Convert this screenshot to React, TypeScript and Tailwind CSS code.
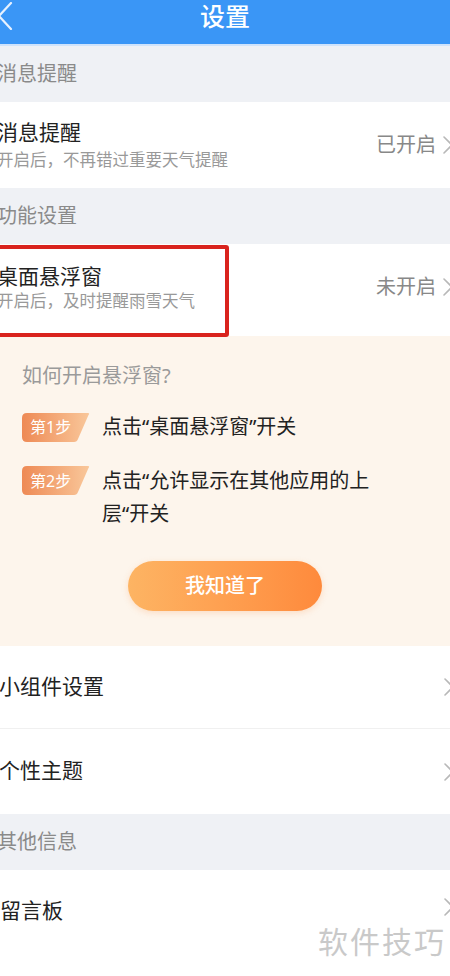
import React from 'react'

const FONT = { fontFamily: '"Noto Sans", "Noto Sans CJK SC", sans-serif' }

function Chevron({ className = '' }: { className?: string }) {
  return (
    <svg width="10" height="18" viewBox="0 0 10 18" className={className} fill="none">
      <path d="M1 1l8 8-8 8" stroke="#b8b8b8" strokeWidth="1.6" strokeLinecap="round" strokeLinejoin="round" />
    </svg>
  )
}

function SectionBand({ label }: { label: string }) {
  return (
    <div className="flex h-[56px] items-center bg-[#eff1f5]">
      <span className="-ml-[3px] text-[20px] text-[#8a8a8a]">{label}</span>
    </div>
  )
}

function StepTag({ n }: { n: number }) {
  return (
    <div className="relative h-[29px] w-[68px] shrink-0">
      <svg className="absolute inset-0" width="68" height="29" viewBox="0 0 68 29">
        <defs>
          <linearGradient id={`tag${n}`} x1="0" x2="1" y1="0" y2="0">
            <stop offset="0" stopColor="#ee8a55" />
            <stop offset="1" stopColor="#f9c79a" />
          </linearGradient>
        </defs>
        <path d="M5 0H66Q68 0 66.5 2L56 26Q55 29 52 29H5Q0 29 0 24V5Q0 0 5 0Z" fill={`url(#tag${n})`} />
      </svg>
      <span className="relative flex h-full items-center pl-[8px] text-[16px] text-white">第{n}步</span>
    </div>
  )
}

export default function App() {
  return (
    <div className="relative h-[976px] w-[450px] overflow-hidden bg-white" style={FONT}>
      {/* header */}
      <div className="relative flex h-[44px] items-center justify-center bg-[#3a96f6]">
        <svg className="absolute left-[-8px] top-[2px]" width="22" height="28" viewBox="0 0 22 28" fill="none">
          <path d="M19 1L7 14l12 13" stroke="#e6f1ff" strokeWidth="2.2" strokeLinecap="round" strokeLinejoin="round" />
        </svg>
        <span className="-mt-[10px] text-[25px] font-medium text-white">设置</span>
      </div>
      <div className="h-[2px] bg-[#cfe3fb]" />

      <SectionBand label="消息提醒" />

      <div className="flex h-[86px] items-center justify-between bg-white">
        <div className="-ml-[3px] -mt-[2px] flex flex-col">
          <span className="text-[21px] leading-[28px] text-[#222]">消息提醒</span>
          <span className="mt-[4px] text-[16.5px] leading-[20px] text-[#999]">开启后，不再错过重要天气提醒</span>
        </div>
        <div className="-mr-[3px] flex items-center gap-[7px]">
          <span className="text-[20px] text-[#888]">已开启</span>
          <Chevron />
        </div>
      </div>

      <SectionBand label="功能设置" />

      <div className="relative flex h-[92px] items-center justify-between bg-white">
        <div className="-ml-[3px] -mt-[8px] flex flex-col">
          <span className="text-[21px] leading-[28px] text-[#222]">桌面悬浮窗</span>
          <span className="mt-[1px] text-[16.5px] leading-[20px] text-[#999]">开启后，及时提醒雨雪天气</span>
        </div>
        <div className="-mr-[3px] -mt-[6px] flex items-center gap-[7px]">
          <span className="text-[20px] text-[#888]">未开启</span>
          <Chevron />
        </div>
        <div className="pointer-events-none absolute left-[-8px] top-[1px] h-[92px] w-[237px] rounded-[3px] border-[4px] border-[#d9231d]" />
      </div>

      {/* tip panel */}
      <div className="flex h-[310px] flex-col bg-[#fdf5ec] pl-[22px] pt-[26px]">
        <span className="text-[20px] leading-[28px] text-[#9a9a9a]">如何开启悬浮窗?</span>
        <div className="mt-[22px] flex items-center gap-[12px]">
          <StepTag n={1} />
          <span className="text-[20px] leading-[30px] text-[#222]">点击“桌面悬浮窗”开关</span>
        </div>
        <div className="mt-[22px] flex items-start gap-[12px]">
          <div className="mt-[2px]">
            <StepTag n={2} />
          </div>
          <span className="w-[300px] text-[20px] leading-[33px] text-[#222]">点击“允许显示在其他应用的上层“开关</span>
        </div>
        <div className="mt-[31px] flex justify-center pr-[22px]">
          <div className="flex h-[50px] w-[194px] items-center justify-center rounded-full bg-gradient-to-r from-[#fdb463] to-[#fe8a3c] shadow-[0_2px_6px_rgba(250,150,80,0.25)]">
            <span className="text-[20px] font-medium text-white">我知道了</span>
          </div>
        </div>
      </div>

      <div className="flex h-[83px] items-center justify-between border-b border-[#f0f0f0] bg-white">
        <span className="-ml-[1px] text-[21px] text-[#222]">小组件设置</span>
        <Chevron className="-mr-[4px]" />
      </div>
      <div className="flex h-[85px] items-center justify-between bg-white">
        <span className="-ml-[1px] -mt-[2px] text-[21px] text-[#222]">个性主题</span>
        <Chevron className="-mr-[4px]" />
      </div>

      <SectionBand label="其他信息" />

      <div className="flex h-[84px] items-center justify-between bg-white">
        <span className="-mt-[2px] text-[21px] text-[#222]">留言板</span>
        <Chevron className="-mr-[4px] -mt-[10px]" />
      </div>

      <div className="pointer-events-none absolute bottom-[16px] right-[4px] text-[30px] leading-[36px] tracking-[2px] text-[#c9c9c9]">
        软件技巧
      </div>
    </div>
  )
}
